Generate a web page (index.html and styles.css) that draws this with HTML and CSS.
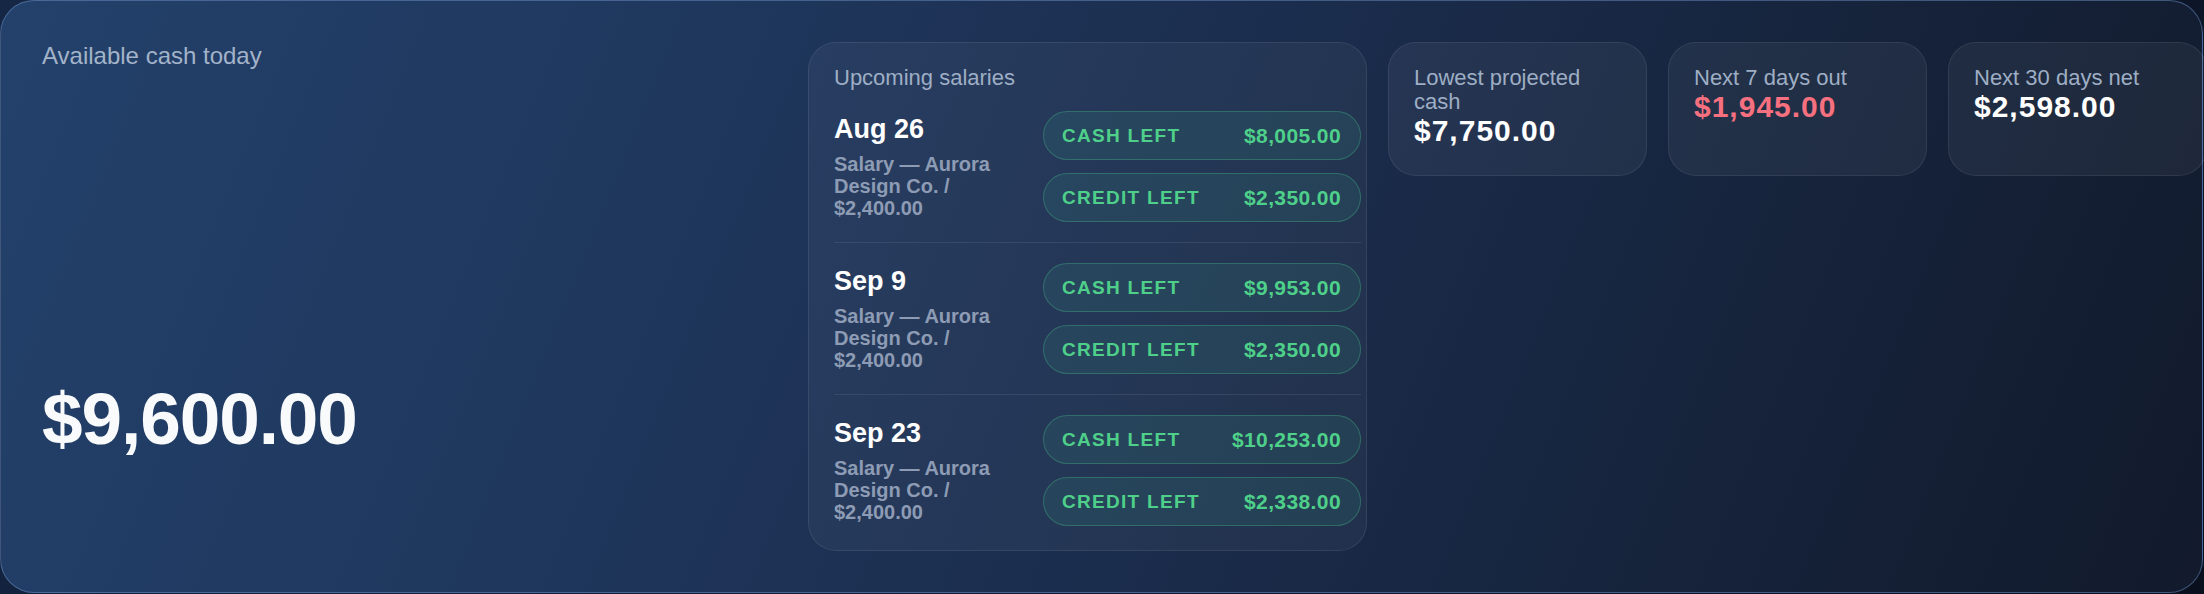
FILE: index.html
```html
<!DOCTYPE html>
<html lang="en">
<head>
    <meta charset="UTF-8">
    <meta name="viewport" content="width=device-width, initial-scale=1.0">
    <title>Cash overview</title>
    <link rel="stylesheet" href="styles.css">
</head>
<body>
    <div class="overview">
        <div class="today">
            <div class="today-label">Available cash today</div>
            <div class="today-amount">$9,600.00</div>
        </div>

        <div class="salaries">
            <div class="salaries-title">Upcoming salaries</div>

            <div class="salary">
                <div class="salary-info">
                    <div class="salary-date">Aug 26</div>
                    <div class="salary-desc">Salary — Aurora Design Co. / $2,400.00</div>
                </div>
                <div class="salary-pills">
                    <div class="pill"><span class="pill-label">CASH LEFT</span><span class="pill-value">$8,005.00</span></div>
                    <div class="pill"><span class="pill-label">CREDIT LEFT</span><span class="pill-value">$2,350.00</span></div>
                </div>
            </div>

            <div class="salary">
                <div class="salary-info">
                    <div class="salary-date">Sep 9</div>
                    <div class="salary-desc">Salary — Aurora Design Co. / $2,400.00</div>
                </div>
                <div class="salary-pills">
                    <div class="pill"><span class="pill-label">CASH LEFT</span><span class="pill-value">$9,953.00</span></div>
                    <div class="pill"><span class="pill-label">CREDIT LEFT</span><span class="pill-value">$2,350.00</span></div>
                </div>
            </div>

            <div class="salary">
                <div class="salary-info">
                    <div class="salary-date">Sep 23</div>
                    <div class="salary-desc">Salary — Aurora Design Co. / $2,400.00</div>
                </div>
                <div class="salary-pills">
                    <div class="pill"><span class="pill-label">CASH LEFT</span><span class="pill-value">$10,253.00</span></div>
                    <div class="pill"><span class="pill-label">CREDIT LEFT</span><span class="pill-value">$2,338.00</span></div>
                </div>
            </div>
        </div>

        <div class="stats">
            <div class="stat">
                <div class="stat-label">Lowest projected cash</div>
                <div class="stat-value">$7,750.00</div>
            </div>
            <div class="stat">
                <div class="stat-label">Next 7 days out</div>
                <div class="stat-value negative">$1,945.00</div>
            </div>
            <div class="stat">
                <div class="stat-label">Next 30 days net</div>
                <div class="stat-value">$2,598.00</div>
            </div>
        </div>
    </div>
</body>
</html>
```

FILE: styles.css
```css
body {
    margin: 0;
    font-family: 'Liberation Sans', Arial, sans-serif;
    background: linear-gradient(135deg, #152745 0%, #0f1a30 60%, #0a0f1e 100%);
    height: 100vh;
    overflow: hidden;
}

.overview {
    box-sizing: border-box;
    width: 2203px;
    height: 593px;
    padding: 41px;
    border: 1px solid rgba(110, 145, 200, 0.5);
    border-radius: 34px;
    background: linear-gradient(112deg, #23416b 0%, #1f375d 30%, #1a2b4a 58%, #152239 80%, #121a2c 100%);
    display: flex;
    gap: 21px;
    color: #fff;
}

/* left column */
.today {
    width: 745px;
    flex-shrink: 0;
    display: flex;
    flex-direction: column;
}

.today-label {
    font-size: 24px;
    color: #a3b3c9;
}

.today-amount {
    margin-top: auto;
    margin-bottom: 96px;
    font-size: 73px;
    line-height: 72px;
    font-weight: bold;
    letter-spacing: -1.1px;
    color: #f8fafc;
}

/* upcoming salaries panel */
.salaries {
    box-sizing: border-box;
    width: 559px;
    flex-shrink: 0;
    padding: 22px 5px 0 25px;
    border: 1px solid rgba(255, 255, 255, 0.08);
    border-radius: 28px;
    background: rgba(255, 255, 255, 0.045);
}

.salaries-title {
    font-size: 22px;
    color: #9eaec4;
}

.salary {
    display: grid;
    grid-template-columns: 188px 1fr;
    column-gap: 21px;
    padding: 20px 0;
    border-bottom: 1px solid rgba(148, 163, 184, 0.16);
}

.salary:last-child {
    border-bottom: none;
}

.salary-date {
    font-size: 27px;
    line-height: 36px;
    font-weight: bold;
    color: #fff;
}

.salary-desc {
    margin-top: 6px;
    font-size: 20px;
    line-height: 22px;
    font-weight: bold;
    color: #8d9cb4;
}

.salary-pills {
    display: flex;
    flex-direction: column;
    gap: 13px;
}

.pill {
    box-sizing: border-box;
    height: 49px;
    padding: 0 19px 0 18px;
    display: flex;
    justify-content: space-between;
    align-items: center;
    border: 1px solid rgba(74, 200, 140, 0.32);
    border-radius: 999px;
    background: rgba(60, 170, 140, 0.12);
    color: #4fd08a;
    font-weight: bold;
}

.pill-label {
    font-size: 19px;
    letter-spacing: 1.3px;
}

.pill-value {
    font-size: 21px;
    letter-spacing: 0.4px;
}

/* summary cards */
.stats {
    display: flex;
    gap: 21px;
    align-self: flex-start;
}

.stat {
    box-sizing: border-box;
    width: 259px;
    height: 134px;
    flex-shrink: 0;
    padding: 23px 25px 0;
    border: 1px solid rgba(255, 255, 255, 0.08);
    border-radius: 28px;
    background: rgba(255, 255, 255, 0.05);
}

.stat-label {
    font-size: 22px;
    line-height: 24px;
    color: #9eaec4;
}

.stat-value {
    font-size: 30px;
    line-height: 34px;
    font-weight: bold;
    letter-spacing: 1px;
    color: #fff;
}

.stat-value.negative {
    color: #f7707f;
}
```
